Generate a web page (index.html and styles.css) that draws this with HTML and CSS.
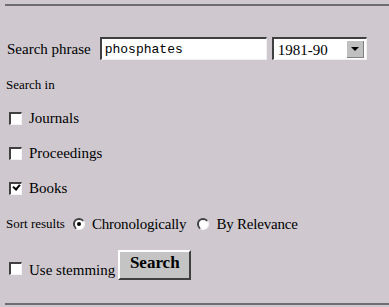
FILE: index.html
```html
<!DOCTYPE html>
<html lang="en">
<head>
    <meta charset="UTF-8">
    <title>Search</title>
    <link rel="stylesheet" href="styles.css">
</head>
<body>
<hr class="rule top">

<form class="search">
    <div class="row phrase">
        <label for="q">Search phrase</label>
        <input id="q" class="field" type="text" value="phosphates">
        <div class="select">
            <span class="value">1981-90</span>
            <span class="arrow"></span>
        </div>
    </div>

    <div class="small heading">Search in</div>

    <div class="row check journals">
        <span class="box"></span>
        <span>Journals</span>
    </div>
    <div class="row check proceedings">
        <span class="box"></span>
        <span>Proceedings</span>
    </div>
    <div class="row check books">
        <span class="box checked"></span>
        <span>Books</span>
    </div>

    <div class="row sort">
        <span class="small">Sort results</span>
        <span class="radio on"></span>
        <span class="opt">Chronologically</span>
        <span class="radio"></span>
        <span class="opt">By Relevance</span>
    </div>

    <div class="row stem">
        <span class="box"></span>
        <span>Use stemming</span>
        <button type="button" class="btn">Search</button>
    </div>
</form>

<hr class="rule bottom">
</body>
</html>
```

FILE: styles.css
```css
html {
    background-color: #cfc9cf;
}
body {
    margin: 0;
    padding: 4px 0 0 5px;
    font-family: "Liberation Serif", "Times New Roman", serif;
    font-size: 15px;
    color: #000;
}
.rule {
    border: none;
    height: 2px;
    background-color: #6e6e6e;
    margin: 0;
}
.search {
    padding-left: 2px;
}
.row {
    display: flex;
    align-items: center;
}
.phrase {
    margin-top: 31px;
    height: 23px;
}
.phrase label {
    margin-right: 9px;
    padding-top: 2px;
}
.field {
    box-sizing: border-box;
    width: 167px;
    height: 23px;
    margin: 0;
    padding: 1px 0 0 3px;
    font-family: "Liberation Mono", "Courier New", monospace;
    font-size: 13px;
    background: #fff;
    border-style: solid;
    border-width: 2px 1px 1px 2px;
    border-color: #404040 #f0f0f0 #f0f0f0 #404040;
    outline: none;
}
.select {
    box-sizing: border-box;
    width: 95px;
    height: 23px;
    margin-left: 5px;
    display: flex;
    align-items: center;
    justify-content: space-between;
    background: #fff;
    border-style: solid;
    border-width: 2px 1px 1px 2px;
    border-color: #404040 #f0f0f0 #f0f0f0 #404040;
    padding: 0 2px 0 4px;
}
.select .value {
    padding-top: 2px;
}
.arrow {
    position: relative;
    width: 16px;
    height: 16px;
    background: #c0c0c0;
    border-right: 1px solid #808080;
    border-bottom: 1px solid #808080;
}
.arrow::after {
    content: "";
    position: absolute;
    left: 4px;
    top: 6px;
    border-left: 4px solid transparent;
    border-right: 4px solid transparent;
    border-top: 4px solid #000;
}
.small {
    font-size: 13px;
}
.heading {
    margin-top: 17px;
    line-height: 16px;
    margin-left: -1px;
}
.check {
    height: 16px;
    padding-left: 2px;
}
.journals {
    margin-top: 17px;
}
.proceedings,
.books {
    margin-top: 19px;
}
.box {
    box-sizing: border-box;
    position: relative;
    width: 13px;
    height: 13px;
    margin-right: 7px;
    background: #fff;
    border-style: solid;
    border-width: 2px 1px 1px 2px;
    border-color: #404040 #f4f4f4 #f4f4f4 #404040;
}
.box.checked::after {
    content: "";
    position: absolute;
    left: 2px;
    top: 0px;
    width: 5px;
    height: 3px;
    border-left: 2px solid #000;
    border-bottom: 2px solid #000;
    transform: rotate(-50deg);
}
.sort {
    margin-top: 20px;
    height: 16px;
}
.sort .small {
    margin-left: -1px;
    margin-right: 8px;
}
.radio {
    box-sizing: border-box;
    position: relative;
    width: 12px;
    height: 12px;
    border-radius: 50%;
    background: #fff;
    border-style: solid;
    border-width: 2px 1px 1px 2px;
    border-color: #404040 #f4f4f4 #f4f4f4 #404040;
    margin-right: 7px;
}
.opt {
    margin-right: 11px;
    letter-spacing: -0.2px;
}
.radio.on::after {
    content: "";
    position: absolute;
    left: 2px;
    top: 2px;
    width: 4px;
    height: 4px;
    border-radius: 50%;
    background: #000;
}
.stem {
    margin-top: 18px;
    height: 30px;
    padding-left: 2px;
}
.stem .box {
    margin-top: 6px;
}
.stem span:nth-child(2) {
    padding-top: 10px;
}
.btn {
    box-sizing: border-box;
    width: 73px;
    height: 30px;
    margin-left: 3px;
    font-family: "Liberation Serif", "Times New Roman", serif;
    font-weight: bold;
    font-size: 17px;
    background: #c4c4c4;
    border-style: solid;
    border-width: 2px;
    border-color: #ffffff #404040 #404040 #ffffff;
    padding: 0 0 4px;
}
.bottom {
    margin-top: 23px;
}
```
